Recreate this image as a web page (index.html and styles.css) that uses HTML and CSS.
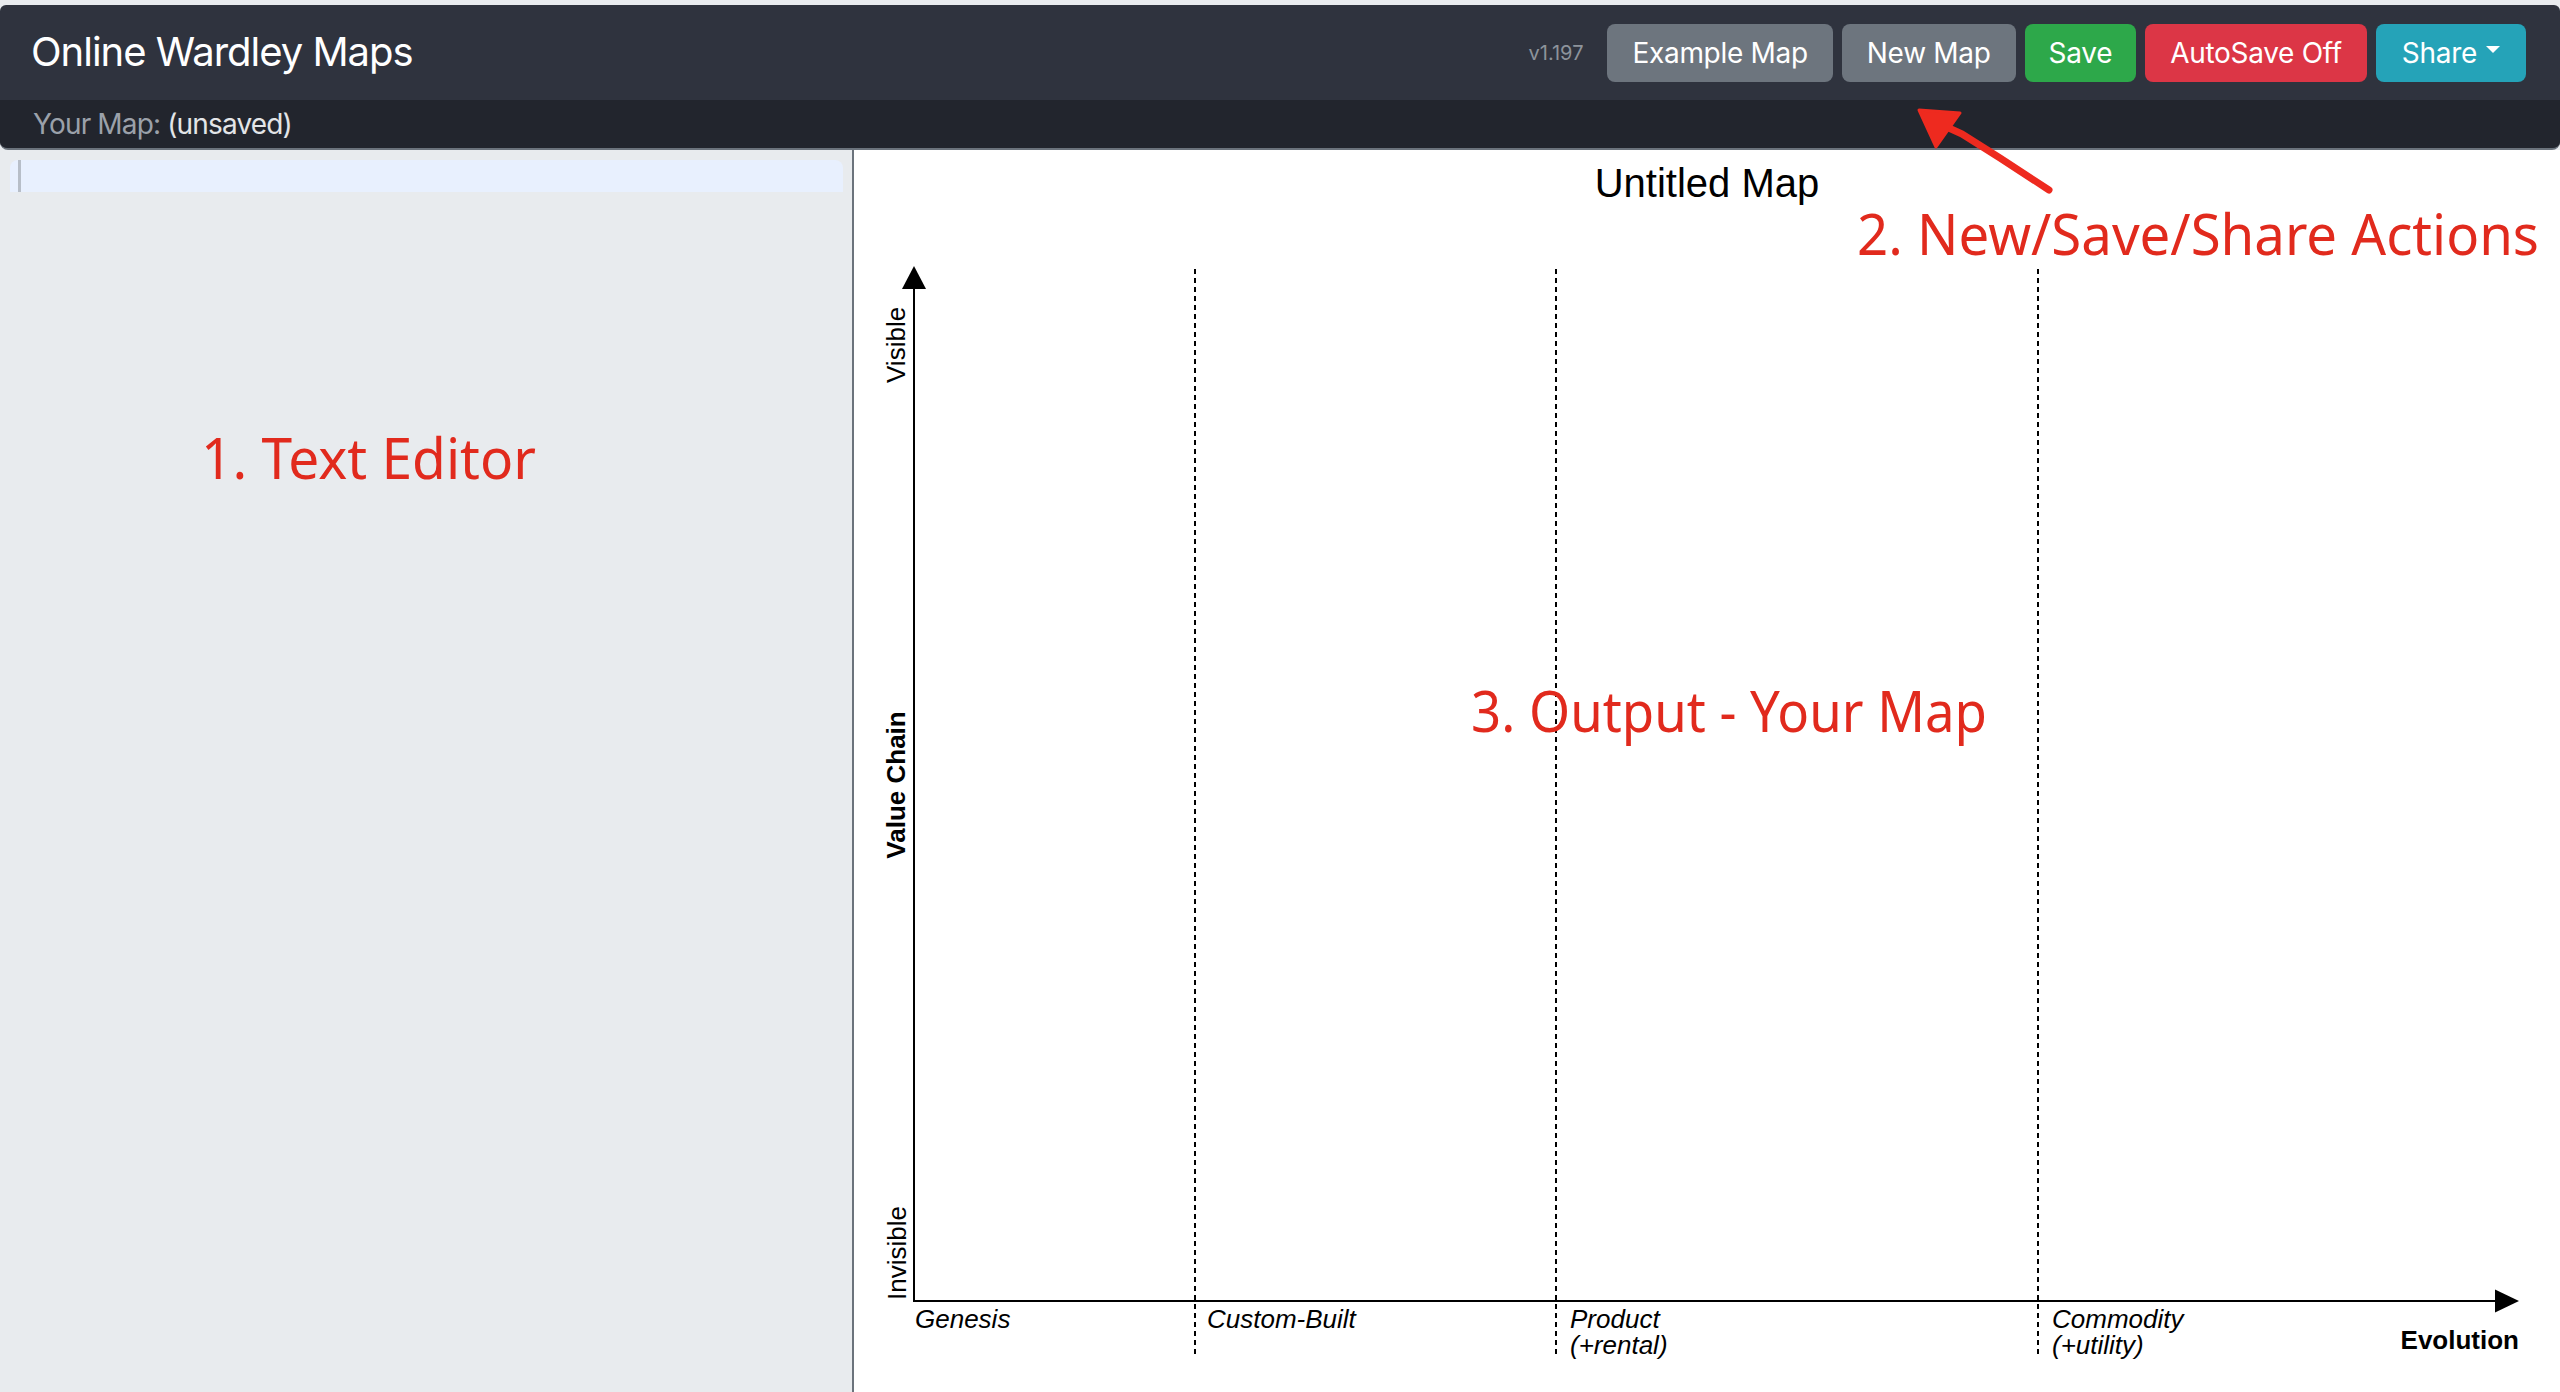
FILE: index.html
```html
<!DOCTYPE html>
<html lang="en">
<head>
<meta charset="utf-8">
<title>Online Wardley Maps</title>
<link rel="stylesheet" href="styles.css">
</head>
<body>
<div class="app">
  <header class="header">
    <div class="topbar">
      <div class="brand">Online Wardley Maps</div>
      <div class="actions">
        <span class="version">v1.197</span>
        <button class="btn btn-secondary">Example Map</button>
        <button class="btn btn-secondary">New Map</button>
        <button class="btn btn-success">Save</button>
        <button class="btn btn-danger">AutoSave Off</button>
        <button class="btn btn-info">Share<span class="caret"></span></button>
      </div>
    </div>
    <div class="subbar"><p class="subbar-text"><span class="muted">Your Map:</span> <span class="mapname">(unsaved)</span></p></div>
  </header>
  <main class="main">
    <section class="editor-pane">
      <div class="editor-line"><span class="cursor"></span></div>
    </section>
    <section class="map-pane">
      <svg class="map" width="1706" height="1242" viewBox="0 0 1706 1242">
        <text class="map-title" x="853" y="47" text-anchor="middle">Untitled Map</text>
        <line class="axis" x1="60" y1="1151" x2="60" y2="136"/>
        <polygon class="arrow" points="60,116 48,139 72,139"/>
        <line class="axis" x1="59" y1="1151" x2="1645" y2="1151"/>
        <polygon class="arrow" points="1665,1151 1641,1139.5 1641,1162.5"/>
        <line class="stage" x1="341" y1="119" x2="341" y2="1205"/>
        <line class="stage" x1="702" y1="119" x2="702" y2="1205"/>
        <line class="stage" x1="1184" y1="119" x2="1184" y2="1205"/>
        <text class="label-y" transform="translate(51,233) rotate(-90)">Visible</text>
        <text class="label-y bold" text-anchor="middle" transform="translate(51,635) rotate(-90)">Value Chain</text>
        <text class="label-y" transform="translate(52,1150) rotate(-90)">Invisible</text>
        <text class="stage-label" x="61" y="1178">Genesis</text>
        <text class="stage-label" x="353" y="1178">Custom-Built</text>
        <text class="stage-label" x="716" y="1178">Product</text>
        <text class="stage-label" x="716" y="1204">(+rental)</text>
        <text class="stage-label" x="1198" y="1178">Commodity</text>
        <text class="stage-label" x="1198" y="1204">(+utility)</text>
        <text class="evolution" x="1665" y="1199" text-anchor="end">Evolution</text>
      </svg>
    </section>
  </main>
  <svg class="annotations" width="2560" height="1392" viewBox="0 0 2560 1392">
    <text class="note" x="201" y="479" textLength="335" lengthAdjust="spacingAndGlyphs">1. Text Editor</text>
    <text class="note" x="1857" y="255" textLength="682" lengthAdjust="spacingAndGlyphs">2. New/Save/Share Actions</text>
    <text class="note" x="1471" y="732" textLength="516" lengthAdjust="spacingAndGlyphs">3. Output - Your Map</text>
    <path class="note-arrow" d="M2049 190 L2000 158 L1962 134 L1940 124"/>
    <polygon class="note-head" points="1919,110 1960,113 1936,147"/>
  </svg>
</div>
</body>
</html>
```

FILE: styles.css
```css
* {
  box-sizing: border-box;
}

html, body {
  margin: 0;
  padding: 0;
}

body {
  background: #e9ecef;
  font-family: "Inter", "Liberation Sans", sans-serif;
  overflow: hidden;
}

.app {
  position: relative;
  width: 2560px;
  height: 1392px;
  padding-top: 5px;
  display: flex;
  flex-direction: column;
}

.header {
  background: #2f333e;
  border-radius: 6px 6px 8px 8px;
  border-bottom: 2px solid #6b737c;
  overflow: hidden;
  flex: none;
}

.topbar {
  height: 95px;
  display: flex;
  align-items: center;
  justify-content: space-between;
  padding: 0 34px 0 31px;
}

.brand {
  color: #ffffff;
  font-size: 40px;
  letter-spacing: -1px;
  line-height: 1;
  padding-bottom: 2px;
}

.actions {
  display: flex;
  align-items: center;
}

.version {
  color: #8d939b;
  font-size: 20px;
  margin-right: 24px;
}

.btn {
  height: 58px;
  padding: 0 25px;
  margin-left: 9px;
  border: none;
  border-radius: 8px;
  color: #ffffff;
  font-family: "Inter", "Liberation Sans", sans-serif;
  font-size: 28px;
  letter-spacing: -0.3px;
  display: inline-flex;
  align-items: center;
  line-height: 1;
}

.version + .btn {
  margin-left: 0;
}

.btn-secondary {
  background: #6d757e;
}

.btn-success {
  background: #2da84a;
  padding: 0 24px;
}

.btn-danger {
  background: #dc3646;
}

.btn-info {
  background: #25a3b8;
  padding: 0 26px 0 26px;
}

.caret {
  display: inline-block;
  margin-left: 9px;
  margin-bottom: 6px;
  border-top: 7px solid #ffffff;
  border-left: 7px solid transparent;
  border-right: 7px solid transparent;
}

.subbar {
  height: 48px;
  background: #22252d;
  padding-left: 33px;
  display: flex;
  align-items: center;
}

.subbar-text {
  margin: 0;
  font-size: 28px;
  letter-spacing: -0.85px;
  line-height: 1;
}

.muted {
  color: #9ba1aa;
}

.mapname {
  color: #e3e5e8;
}

.main {
  flex: 1;
  display: flex;
  min-height: 0;
}

.editor-pane {
  width: 854px;
  flex: none;
  background: #e8ebee;
  border-right: 2px solid #6b737c;
  padding: 10px 9px 0 10px;
}

.editor-line {
  height: 32px;
  background: #e8f0fe;
  border-radius: 8px 8px 0 0;
  padding-left: 8px;
}

.cursor {
  display: block;
  width: 3px;
  height: 32px;
  background: #b7bec8;
}

.map-pane {
  flex: 1;
  background: #ffffff;
  overflow: hidden;
}

.map {
  display: block;
  font-family: "Liberation Sans", Arial, sans-serif;
}

.map-title {
  font-size: 40px;
  fill: #000000;
}

.axis {
  stroke: #000000;
  stroke-width: 2;
}

.arrow {
  fill: #000000;
}

.stage {
  stroke: #000000;
  stroke-width: 2;
  stroke-dasharray: 5 4;
}

.label-y {
  font-size: 26px;
  fill: #000000;
}

.bold {
  font-weight: bold;
}

.stage-label {
  font-size: 26px;
  font-style: italic;
  fill: #000000;
}

.evolution {
  font-size: 26px;
  font-weight: bold;
  fill: #000000;
}

.annotations {
  position: absolute;
  top: 0;
  left: 0;
  pointer-events: none;
}

.note {
  font-family: "Noto Sans", "Open Sans", sans-serif;
  font-size: 56px;
  font-weight: 400;
  fill: #e12a1d;
}

.note-arrow {
  fill: none;
  stroke: #ee2a1f;
  stroke-width: 7;
  stroke-linecap: round;
  stroke-linejoin: round;
}

.note-head {
  fill: #ee2a1f;
  stroke: #ee2a1f;
  stroke-width: 3;
  stroke-linejoin: round;
}
```
